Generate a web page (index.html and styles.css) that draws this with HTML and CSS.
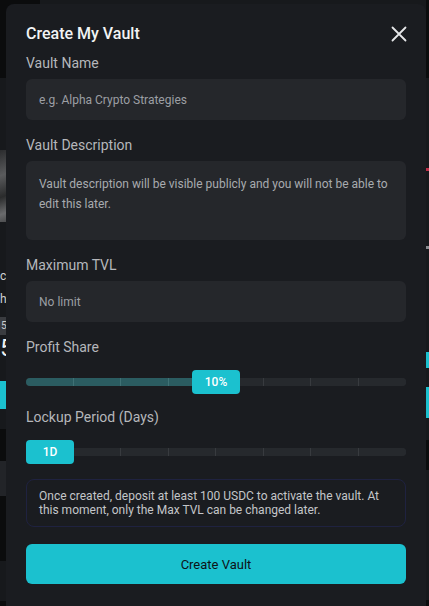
FILE: index.html
```html
<!DOCTYPE html>
<html lang="en">
<head>
<meta charset="utf-8">
<title>Create My Vault</title>
<link rel="stylesheet" href="styles.css">
</head>
<body>
<div class="bg">
  <div class="strip strip-left">
    <div class="blk h78 dark"></div>
    <div class="blk h72 band"></div>
    <div class="blk h72 photo"></div>
    <div class="blk h43 band"></div>
    <div class="txt t-sm">cc</div>
    <div class="txt t-sm">h</div>
    <div class="blk h6 band"></div>
    <div class="blk h18 chip"><span class="chip-t">5</span></div>
    <div class="txt t-lg">5</div>
    <div class="blk h20 band"></div>
    <div class="blk h28 teal"></div>
    <div class="blk h20 band"></div>
    <div class="blk h32 dark"></div>
    <div class="blk h35 mid"></div>
    <div class="blk h65 dark"></div>
    <div class="blk h40 band"></div>
  </div>
  <div class="bg-mid"></div>
  <div class="strip strip-right">
    <div class="blk h78 dark"></div>
    <div class="blk h90 band"></div>
    <div class="blk h3 red"></div>
    <div class="blk h75 band"></div>
    <div class="blk h3 grey"></div>
    <div class="blk h103 band"></div>
    <div class="blk h16 teal"></div>
    <div class="blk h19 band"></div>
    <div class="blk h31 teal"></div>
    <div class="blk h22 band"></div>
    <div class="blk h30 dark"></div>
    <div class="blk h130 band"></div>
  </div>
</div>

<div class="modal">
  <div class="modal-head">
    <h1 class="title">Create My Vault</h1>
    <svg class="close" width="16" height="16" viewBox="0 0 16 16" aria-hidden="true">
      <path d="M1.5 1.5 L14.5 14.5 M14.5 1.5 L1.5 14.5" stroke="#e6e7e9" stroke-width="1.8" stroke-linecap="round" fill="none"/>
    </svg>
  </div>

  <div class="field first">
    <div class="label">Vault Name</div>
    <div class="input">e.g. Alpha Crypto Strategies</div>
  </div>

  <div class="field">
    <div class="label">Vault Description</div>
    <div class="input textarea">Vault description will be visible publicly and you will not be able to edit this later.</div>
  </div>

  <div class="field">
    <div class="label">Maximum TVL</div>
    <div class="input">No limit</div>
  </div>

  <div class="field">
    <div class="label">Profit Share</div>
    <div class="slider">
      <div class="track">
        <span class="seg on"></span><span class="seg on"></span><span class="seg on"></span><span class="seg on"></span>
        <span class="seg"></span><span class="seg"></span><span class="seg"></span><span class="seg"></span>
      </div>
      <div class="thumb" style="left: 166px">10%</div>
    </div>
  </div>

  <div class="field tight">
    <div class="label">Lockup Period (Days)</div>
    <div class="slider">
      <div class="track">
        <span class="seg"></span><span class="seg"></span><span class="seg"></span><span class="seg"></span>
        <span class="seg"></span><span class="seg"></span><span class="seg"></span><span class="seg"></span>
      </div>
      <div class="thumb" style="left: 0px">1D</div>
    </div>
  </div>

  <div class="notice">Once created, deposit at least 100 USDC to activate the vault. At this moment, only the Max TVL can be changed later.</div>

  <button class="cta" type="button">Create Vault</button>
</div>
</body>
</html>
```

FILE: styles.css
```css
* { box-sizing: border-box; }

html, body {
  margin: 0;
  padding: 0;
  height: 606px;
  overflow: hidden;
}

body {
  background: #0b0c0d;
  font-family: Roboto, "Noto Sans", "Liberation Sans", sans-serif;
  position: relative;
}

/* background page (mostly hidden under the modal) */
.bg {
  display: flex;
  height: 606px;
}
.strip {
  display: flex;
  flex-direction: column;
  overflow: hidden;
  flex: none;
}
.strip-left { width: 40px; }
.strip-right { width: 3px; }
.bg-mid { flex: 1; background: #17191c; }

.blk { flex: none; width: 100%; }
.h3 { height: 3px; }
.h6 { height: 6px; }
.h16 { height: 16px; }
.h18 { height: 18px; }
.h19 { height: 19px; }
.h20 { height: 20px; }
.h22 { height: 22px; }
.h28 { height: 28px; }
.h30 { height: 30px; }
.h31 { height: 31px; }
.h32 { height: 32px; }
.h35 { height: 35px; }
.h40 { height: 40px; }
.h43 { height: 43px; }
.h65 { height: 65px; }
.h72 { height: 72px; }
.h75 { height: 75px; }
.h78 { height: 78px; }
.h90 { height: 90px; }
.h103 { height: 103px; }
.h130 { height: 130px; }

.dark { background: #0b0c0d; }
.band { background: #17191c; }
.mid { background: #222428; }
.photo { background: linear-gradient(160deg, #2b2c2e 0%, #5a5b5d 30%, #2a2b2c 55%, #6a6b6d 75%, #232425 100%); }
.chip { background: #3a3c40; }
.chip-t { display: block; padding-left: 1px; font-size: 10px; line-height: 18px; color: #c9cbcf; }
.teal { background: #1bc1cf; }
.red { background: #c0304a; }
.grey { background: #8b8d91; }

.txt {
  flex: none;
  white-space: nowrap;
  color: #d0d2d5;
  background: #17191c;
  padding-left: 0;
}
.t-sm { font-size: 12px; line-height: 23px; }
.t-lg { font-size: 24px; line-height: 26px; color: #f2f2f2; }

/* modal */
.modal {
  position: absolute;
  left: 6px;
  top: 4px;
  width: 420px;
  height: 630px;
  background: #1a1c20;
  border-radius: 8px;
  padding: 18px 20px 0 20px;
  display: flex;
  flex-direction: column;
}

.modal-head {
  display: flex;
  align-items: center;
  justify-content: space-between;
  height: 24px;
}
.title {
  margin: 0;
  font-size: 16px;
  font-weight: 500;
  line-height: 24px;
  color: #f2f3f4;
}
.close { margin-right: -1px; }

.field {
  display: flex;
  flex-direction: column;
  gap: 6px;
  margin-top: 15px;
}
.field.first { margin-top: 7px; }
.field.tight { margin-top: 13px; }

.label {
  font-size: 14px;
  line-height: 20px;
  color: #b5b7bb;
}

.input {
  height: 41px;
  background: #25272b;
  border-radius: 6px;
  padding: 0 13px;
  display: flex;
  align-items: center;
  font-size: 12px;
  color: #9c9fa4;
}
.textarea {
  height: 79px;
  align-items: flex-start;
  padding-top: 13px;
  line-height: 20px;
  color: #a8abaf;
}

.slider {
  position: relative;
  height: 24px;
  margin-top: 7px;
}
.track {
  position: absolute;
  left: 0;
  right: 0;
  top: 8px;
  height: 8px;
  border-radius: 4px;
  overflow: hidden;
  display: grid;
  grid-template-columns: repeat(8, 1fr);
  background: #2a2d31;
}
.seg {
  background: #26292d;
  border-right: 1px solid #383b3f;
}
.seg:last-child { border-right: 0; }
.seg.on {
  background: #2b5c61;
  border-right-color: #3f7175;
}
.thumb {
  position: absolute;
  top: 0;
  width: 48px;
  height: 24px;
  border-radius: 4px;
  background: #1bc1cf;
  color: #ffffff;
  font-size: 12px;
  font-weight: 500;
  display: flex;
  align-items: center;
  justify-content: center;
}

.notice {
  margin-top: 15px;
  height: 48px;
  border: 1px solid #1f2240;
  border-radius: 8px;
  padding: 9px 12px;
  font-size: 12px;
  line-height: 14px;
  color: #c4c6c9;
}

.cta {
  margin-top: 17px;
  height: 40px;
  width: 100%;
  border: 0;
  border-radius: 6px;
  background: #1bc1cf;
  color: #0e1317;
  font-family: Roboto, "Noto Sans", "Liberation Sans", sans-serif;
  font-size: 13px;
  cursor: pointer;
}
```
